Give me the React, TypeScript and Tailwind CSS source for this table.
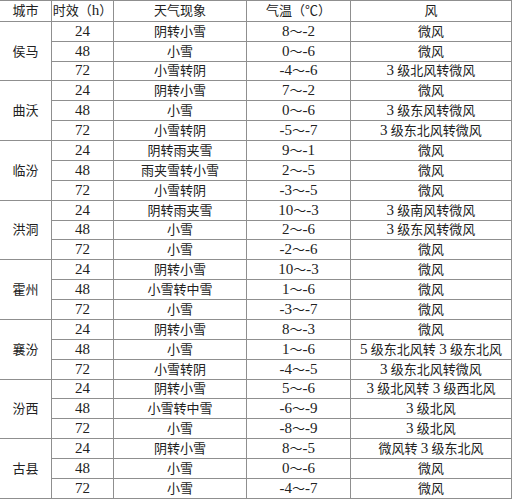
import { Fragment } from "react";

type Row = [string, string, string, string];

const cities: { name: string; rows: Row[] }[] = [
  {
    name: "侯马",
    rows: [
      ["24", "阴转小雪", "8～-2", "微风"],
      ["48", "小雪", "0～-6", "微风"],
      ["72", "小雪转阴", "-4～-6", "3 级北风转微风"],
    ],
  },
  {
    name: "曲沃",
    rows: [
      ["24", "阴转小雪", "7～-2", "微风"],
      ["48", "小雪", "0～-6", "3 级东风转微风"],
      ["72", "小雪转阴", "-5～-7", "3 级东北风转微风"],
    ],
  },
  {
    name: "临汾",
    rows: [
      ["24", "阴转雨夹雪", "9～-1", "微风"],
      ["48", "雨夹雪转小雪", "2～-5", "微风"],
      ["72", "小雪转阴", "-3～-5", "微风"],
    ],
  },
  {
    name: "洪洞",
    rows: [
      ["24", "阴转雨夹雪", "10～-3", "3 级南风转微风"],
      ["48", "小雪", "2～-6", "3 级东风转微风"],
      ["72", "小雪", "-2～-6", "微风"],
    ],
  },
  {
    name: "霍州",
    rows: [
      ["24", "阴转小雪", "10～-3", "微风"],
      ["48", "小雪转中雪", "1～-6", "微风"],
      ["72", "小雪", "-3～-7", "微风"],
    ],
  },
  {
    name: "襄汾",
    rows: [
      ["24", "阴转小雪", "8～-3", "微风"],
      ["48", "小雪", "1～-6", "5 级东北风转 3 级东北风"],
      ["72", "小雪转阴", "-4～-5", "3 级东北风转微风"],
    ],
  },
  {
    name: "汾西",
    rows: [
      ["24", "阴转小雪", "5～-6", "3 级北风转 3 级西北风"],
      ["48", "小雪转中雪", "-6～-9", "3 级北风"],
      ["72", "小雪", "-8～-9", "3 级北风"],
    ],
  },
  {
    name: "古县",
    rows: [
      ["24", "阴转小雪", "8～-5", "微风转 3 级东北风"],
      ["48", "小雪", "0～-6", "微风"],
      ["72", "小雪", "-4～-7", "微风"],
    ],
  },
];

const headers = ["城市", "时效（h）", "天气现象", "气温（℃）", "风"];

const cell = "bg-white flex items-center justify-center whitespace-pre";

// digits/latin in the original are a slightly larger Times face than the CJK text
function Text({ value }: { value: string }) {
  const parts = value.match(/[0-9a-zA-Z\-]+|[^0-9a-zA-Z\-]+/g) ?? [];
  return (
    <span>
      {parts.map((p, i) =>
        /[0-9a-zA-Z\-]/.test(p) ? (
          <span key={i} className="text-[15px]">
            {p}
          </span>
        ) : (
          <Fragment key={i}>{p}</Fragment>
        )
      )}
    </span>
  );
}

export default function App() {
  return (
    <div className="w-[512px] h-[500px] bg-white overflow-hidden font-['Liberation_Serif','Noto_Sans_CJK_SC',serif] text-[13px] leading-none text-[#222]">
      <div className="grid grid-cols-[51px_61px_132px_103px_160px] grid-rows-[19.8px_repeat(24,18.875px)] gap-px bg-[#8f8f8f] pt-px pr-px pb-px w-[512px]">
        {headers.map((h) => (
          <div key={h} className={cell}>
            <Text value={h} />
          </div>
        ))}
        {cities.map((c) => (
          <Fragment key={c.name}>
            <div className={`${cell} row-span-3`}>{c.name}</div>
            {c.rows.map((r, i) =>
              r.map((v, j) => (
                <div key={`${c.name}-${i}-${j}`} className={cell}>
                  <Text value={v} />
                </div>
              ))
            )}
          </Fragment>
        ))}
      </div>
    </div>
  );
}
